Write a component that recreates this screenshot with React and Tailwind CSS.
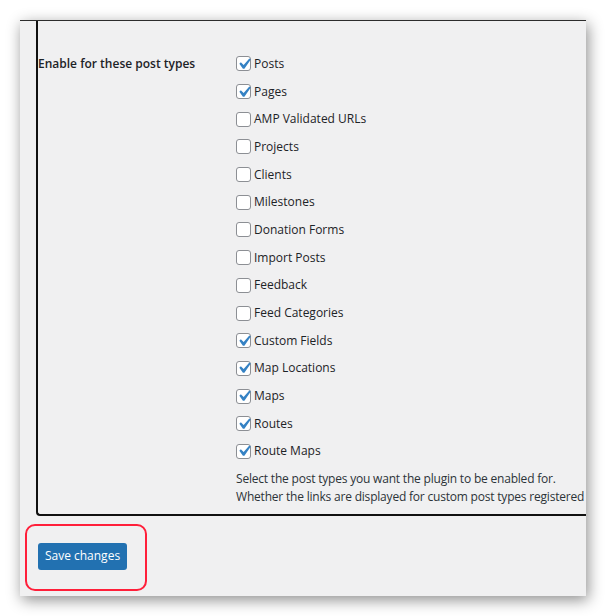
import React from "react";

const postTypes = [
  { label: "Posts", checked: true },
  { label: "Pages", checked: true },
  { label: "AMP Validated URLs", checked: false },
  { label: "Projects", checked: false },
  { label: "Clients", checked: false },
  { label: "Milestones", checked: false },
  { label: "Donation Forms", checked: false },
  { label: "Import Posts", checked: false },
  { label: "Feedback", checked: false },
  { label: "Feed Categories", checked: false },
  { label: "Custom Fields", checked: true },
  { label: "Map Locations", checked: true },
  { label: "Maps", checked: true },
  { label: "Routes", checked: true },
  { label: "Route Maps", checked: true },
];

function Checkbox({ checked }) {
  return (
    <span className="w-[15px] h-[15px] shrink-0 rounded-[3px] border border-[#8c8f94] bg-white flex items-center justify-center">
      {checked && (
        <svg viewBox="0 0 20 20" className="w-[22px] h-[22px] -m-[4px] shrink-0">
          <path
            fill="#3582c4"
            d="M14.83 4.89l1.34.94-5.81 8.38H9.02L5.78 9.67l1.34-1.25 2.57 2.4z"
          />
        </svg>
      )}
    </span>
  );
}

export default function App() {
  return (
    <div
      className="w-[606px] h-[616px] bg-white pt-[20px] pl-[20px] text-[#1d2327]"
      style={{ fontFamily: '"Open Sans", "Noto Sans", sans-serif' }}
    >
      <div className="w-[566px] h-[576px] bg-[#f0f0f1] border-t border-[#2c2c2c] overflow-hidden shadow-[2px_4px_14px_rgba(0,0,0,0.45)]">
        {/* settings table, outlined */}
        <div className="ml-[16px] h-[495px] border-l-2 border-b-2 border-[#111] rounded-bl-[4px] pt-[29px] flex">
          <div className="w-[198px] shrink-0 h-[27.7px] flex items-center text-[12px] font-semibold">
            Enable for these post types
          </div>
          <div className="flex flex-col whitespace-nowrap">
            {postTypes.map((t) => (
              <label key={t.label} className="h-[27.7px] flex items-center gap-[3px] text-[12px]">
                <Checkbox checked={t.checked} />
                <span>{t.label}</span>
              </label>
            ))}
            <p className="mt-[5px] text-[12px] leading-[17.5px] tracking-[-0.2px] text-[#2c3338]">
              Select the post types you want the plugin to be enabled for.
              <br />
              Whether the links are displayed for custom post types registered by other plugins depends on them.
            </p>
          </div>
        </div>

        <div className="ml-[5px] mt-[8px] w-[122px] h-[67px] border-2 border-[#ff1f3a] rounded-[10px] pl-[11px] pt-[16px]">
          <button className="w-[89px] h-[27px] rounded-[3px] bg-[#2271b1] text-white text-[12px]">
            Save changes
          </button>
        </div>
      </div>
    </div>
  );
}
